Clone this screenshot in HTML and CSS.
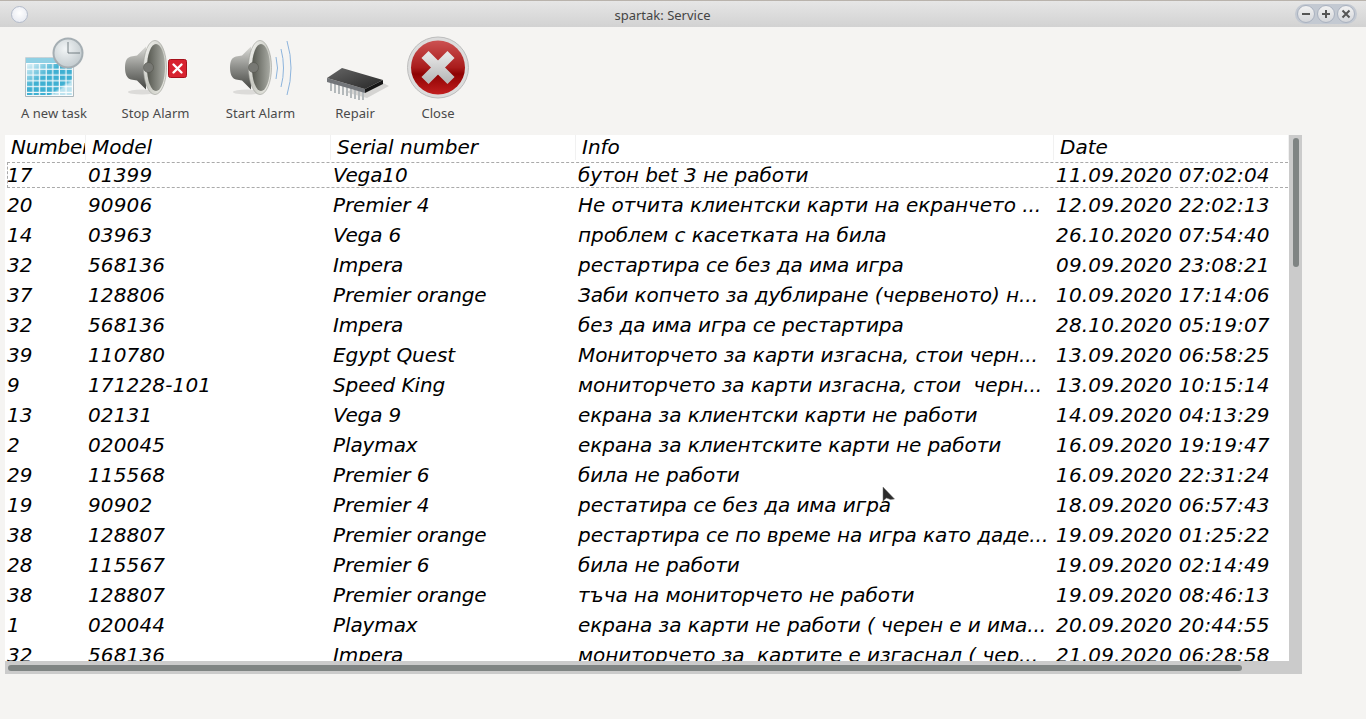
FILE: index.html
```html
<!DOCTYPE html>
<html lang="en">
<head>
  <meta charset="UTF-8" />
  <meta name="viewport" content="width=device-width, initial-scale=1.0"/>
  <title>spartak: Service</title>
  <link rel="stylesheet" href="styles.css">
</head>
<body>

  <header class="titlebar">
    <span class="menu-btn"></span>
    <span class="title">spartak: Service</span>
    <div class="win-btns">
      <span class="win-btn"><svg viewBox="0 0 12 12"><path d="M2 6h8"/></svg></span>
      <span class="win-btn"><svg viewBox="0 0 12 12"><path d="M2 6h8M6 2v8"/></svg></span>
      <span class="win-btn"><svg viewBox="0 0 12 12"><path d="M2.5 2.5l7 7M9.5 2.5l-7 7"/></svg></span>
    </div>
  </header>

  <nav class="toolbar">
    <div class="tool">
      <svg class="tool-icon" viewBox="19 36 70 64">
        <defs>
          <linearGradient id="calBody" x1="0" y1="0" x2="0" y2="1">
            <stop offset="0" stop-color="#c9d3d8"/>
            <stop offset="1" stop-color="#a9b6bc"/>
          </linearGradient>
          <linearGradient id="calFade" x1="0" y1="0" x2="1" y2="1">
            <stop offset="0" stop-color="#fff" stop-opacity=".9"/>
            <stop offset=".4" stop-color="#fff" stop-opacity="0"/>
            <stop offset=".72" stop-color="#fff" stop-opacity="0"/>
            <stop offset=".78" stop-color="#fff" stop-opacity=".65"/>
          </linearGradient>
          <pattern id="calCells" x="27" y="64" width="6.6" height="5.8" patternUnits="userSpaceOnUse">
            <rect width="5.4" height="4.6" fill="#3fb0d2"/>
          </pattern>
          <radialGradient id="clockFace" cx=".4" cy=".35" r=".8">
            <stop offset="0" stop-color="#f2f5f6"/>
            <stop offset="1" stop-color="#bcc5c9"/>
          </radialGradient>
          <linearGradient id="coneRim" x1="0" y1="0" x2="1" y2="1">
            <stop offset="0" stop-color="#fbfbf8"/>
            <stop offset=".5" stop-color="#c8c9c2"/>
            <stop offset="1" stop-color="#efefe9"/>
          </linearGradient>
          <linearGradient id="coneIn" x1="0" y1="0" x2="1" y2="0">
            <stop offset="0" stop-color="#55574f"/>
            <stop offset="1" stop-color="#a8aaa3"/>
          </linearGradient>
          <linearGradient id="magnet" x1="0" y1="0" x2="0" y2="1">
            <stop offset="0" stop-color="#dadad6"/>
            <stop offset=".5" stop-color="#8b8c88"/>
            <stop offset="1" stop-color="#444541"/>
          </linearGradient>
          <linearGradient id="redBall" x1="0" y1="0" x2="0" y2="1">
            <stop offset="0" stop-color="#cc5252"/>
            <stop offset=".5" stop-color="#a91c1c"/>
            <stop offset=".62" stop-color="#8e0202"/>
            <stop offset="1" stop-color="#c21f1f"/>
          </linearGradient>
          <linearGradient id="silver" x1="0" y1="0" x2="0" y2="1">
            <stop offset="0" stop-color="#e6e6e6"/>
            <stop offset="1" stop-color="#b9b9b9"/>
          </linearGradient>
          <linearGradient id="chipTop" x1="0" y1="0" x2="1" y2="1">
            <stop offset="0" stop-color="#666"/>
            <stop offset="1" stop-color="#272727"/>
          </linearGradient>
          <symbol id="speaker" viewBox="0 0 42 56" overflow="visible">
            <ellipse cx="17" cy="52" rx="14" ry="2.5" fill="#000" opacity=".1"/>
            <path d="M0 27.500c0-7 2-10 6-11l6-1 9-9v43l-9-9-6-1c-4-1-6-5-6-12z" fill="url(#magnet)"/>
            <ellipse cx="30" cy="27.5" rx="11.5" ry="27" fill="url(#coneRim)" stroke="#9b9c96" stroke-width=".6"/>
            <ellipse cx="31" cy="27.5" rx="9" ry="23.5" fill="url(#coneIn)"/>
            <circle cx="23.5" cy="27.5" r="5" fill="#777873" stroke="#55564f" stroke-width=".6"/>
          </symbol>
        </defs>
        <rect x="25" y="57" width="49" height="40" rx="1" fill="url(#calBody)"/>
        <rect x="26" y="58" width="47" height="5" fill="#8fd0e4"/>
        <rect x="26" y="63" width="47" height="33" fill="#f3f8fa"/>
        <rect x="27" y="64" width="45" height="31" fill="url(#calCells)"/>
        <rect x="26" y="63" width="47" height="33" fill="url(#calFade)"/>
        <circle cx="68" cy="53" r="15.5" fill="#a5aeb3"/>
        <circle cx="68" cy="53" r="13.5" fill="url(#clockFace)"/>
        <path d="M68 42v11h12" fill="none" stroke="#59646a" stroke-width=".8"/>
      </svg>
      <span class="tool-label">A new task</span>
    </div>

    <div class="tool">
      <svg class="tool-icon" viewBox="121 36 70 64">
        <use href="#speaker" x="125" y="40" width="42" height="56"/>
        <rect x="168.500" y="59.500" width="18" height="18" rx="2" fill="#d8222f" stroke="#a5111b"/>
        <path d="M173.500 64.500l8 8M181.500 64.500l-8 8" stroke="#fff" stroke-width="2.400" stroke-linecap="round"/>
      </svg>
      <span class="tool-label">Stop Alarm</span>
    </div>

    <div class="tool">
      <svg class="tool-icon" viewBox="226 36 70 64">
        <use href="#speaker" x="230" y="40" width="42" height="56"/>
        <g fill="none" stroke="#8db4dd" stroke-width="1">
          <path d="M276 57q3 11 0 22"/>
          <path d="M281 49q5 19 0 38"/>
          <path d="M287 41q8 27 0 54"/>
        </g>
      </svg>
      <span class="tool-label">Start Alarm</span>
    </div>

    <div class="tool">
      <svg class="tool-icon" viewBox="320 36 70 64">
        <path d="M345 92l22 6 22-12-10-5z" fill="#000" opacity=".13"/>
        <g stroke="#b4b9bb" stroke-width="2" fill="none">
          <path d="M331 82v9M335 84v9M339 85v9M343 86v9M347 87v9M351 88v10M355 89v10M359 90v10M363 91v10"/>
        </g>
        <path d="M327 78l38 11v4l-38-11z" fill="#73767a"/>
        <path d="M365 89l18-9v4l-18 9z" fill="#161616"/>
        <path d="M327 78l15-10 41 12-18 9z" fill="url(#chipTop)"/>
      </svg>
      <span class="tool-label">Repair</span>
    </div>

    <div class="tool">
      <svg class="tool-icon" viewBox="403 36 70 64">
        <circle cx="438" cy="67.500" r="30.500" fill="#dcdcdc" stroke="#bdbdbd"/>
        <circle cx="438" cy="67.500" r="27" fill="url(#redBall)"/>
        <path d="M425 54.500l26 26M451 54.500l-26 26" stroke="url(#silver)" stroke-width="10"/>
      </svg>
      <span class="tool-label">Close</span>
    </div>
  </nav>

  <section class="panel">
    <div class="list">
      <div class="row head">
        <div>Number</div><div>Model</div><div>Serial number</div><div>Info</div><div>Date</div>
      </div>
      <div class="row focused">
        <div>17</div><div>01399</div><div>Vega10</div><div>бутон bet 3 не работи</div><div>11.09.2020 07:02:04</div>
      </div>
      <div class="row">
        <div>20</div><div>90906</div><div>Premier 4</div><div>Не отчита клиентски карти на екранчето ...</div><div>12.09.2020 22:02:13</div>
      </div>
      <div class="row">
        <div>14</div><div>03963</div><div>Vega 6</div><div>проблем с касетката на била</div><div>26.10.2020 07:54:40</div>
      </div>
      <div class="row">
        <div>32</div><div>568136</div><div>Impera</div><div>рестартира се без да има игра</div><div>09.09.2020 23:08:21</div>
      </div>
      <div class="row">
        <div>37</div><div>128806</div><div>Premier orange</div><div>Заби копчето за дублиране (червеното) н...</div><div>10.09.2020 17:14:06</div>
      </div>
      <div class="row">
        <div>32</div><div>568136</div><div>Impera</div><div>без да има игра се рестартира</div><div>28.10.2020 05:19:07</div>
      </div>
      <div class="row">
        <div>39</div><div>110780</div><div>Egypt Quest</div><div>Мониторчето за карти изгасна, стои черн...</div><div>13.09.2020 06:58:25</div>
      </div>
      <div class="row">
        <div>9</div><div>171228-101</div><div>Speed King</div><div>мониторчето за карти изгасна, стои &nbsp;черн...</div><div>13.09.2020 10:15:14</div>
      </div>
      <div class="row">
        <div>13</div><div>02131</div><div>Vega 9</div><div>екрана за клиентски карти не работи</div><div>14.09.2020 04:13:29</div>
      </div>
      <div class="row">
        <div>2</div><div>020045</div><div>Playmax</div><div>екрана за клиентските карти не работи</div><div>16.09.2020 19:19:47</div>
      </div>
      <div class="row">
        <div>29</div><div>115568</div><div>Premier 6</div><div>била не работи</div><div>16.09.2020 22:31:24</div>
      </div>
      <div class="row">
        <div>19</div><div>90902</div><div>Premier 4</div><div>рестатира се без да има игра</div><div>18.09.2020 06:57:43</div>
      </div>
      <div class="row">
        <div>38</div><div>128807</div><div>Premier orange</div><div>рестартира се по време на игра като даде...</div><div>19.09.2020 01:25:22</div>
      </div>
      <div class="row">
        <div>28</div><div>115567</div><div>Premier 6</div><div>била не работи</div><div>19.09.2020 02:14:49</div>
      </div>
      <div class="row">
        <div>38</div><div>128807</div><div>Premier orange</div><div>тъча на мониторчето не работи</div><div>19.09.2020 08:46:13</div>
      </div>
      <div class="row">
        <div>1</div><div>020044</div><div>Playmax</div><div>екрана за карти не работи ( черен е и има...</div><div>20.09.2020 20:44:55</div>
      </div>
      <div class="row">
        <div>32</div><div>568136</div><div>Impera</div><div>мониторчето за &nbsp;картите е изгаснал ( чер...</div><div>21.09.2020 06:28:58</div>
      </div>
    </div>
    <div class="vscroll"><div class="vthumb"></div></div>
    <div class="hscroll"><div class="hthumb"></div></div>
  </section>

  <svg class="cursor" viewBox="0 0 14 18">
    <path d="M1 1v14l3.500-3 4 1.500 4-.500z" fill="#2b2b2b" stroke="#777" stroke-width=".5"/>
  </svg>

</body>
</html>
```

FILE: styles.css
```css
html, body {
  margin: 0;
  height: 719px;
  overflow: hidden;
}

body {
  background: #f5f4f2;
  font-family: "Noto Sans", sans-serif;
  position: relative;
}

.titlebar {
  height: 26px;
  border-top: 1px solid #b9b3ac;
  background: linear-gradient(#e6e6e6, #d2d2d2);
  display: flex;
  align-items: center;
  justify-content: space-between;
  padding: 0 9px 0 11px;
}

.menu-btn {
  width: 15px;
  height: 15px;
  border-radius: 50%;
  border: 1px solid #b4bccb;
  background: radial-gradient(circle at 50% 40%, #fff, #e2e5ee);
}

.title {
  font-size: 13px;
  color: #444;
  margin-left: 2px;
  padding-top: 2px;
}

.win-btns {
  display: flex;
  gap: 2px;
  padding: 1px 2px;
  border-radius: 10px;
  background: #c3c9d2;
}

.win-btn {
  width: 16px;
  height: 16px;
  border-radius: 50%;
  border: 1px solid #aab2c0;
  background: linear-gradient(#f2f2f2, #d4d6da);
  display: flex;
  align-items: center;
  justify-content: center;
}

.win-btn svg {
  width: 12px;
  height: 12px;
  fill: none;
  stroke: #555;
  stroke-width: 2;
}

.toolbar {
  height: 99px;
  padding: 9px 0 0 5px;
  display: grid;
  grid-template-columns: 98px 105px 105px 84px 82px;
}

.tool {
  display: flex;
  flex-direction: column;
  align-items: center;
}

.tool-icon {
  width: 70px;
  height: 64px;
  flex: none;
}

.tool-label {
  font-size: 13px;
  line-height: 18px;
  margin-top: 4px;
  color: #4a4a4a;
  letter-spacing: .05px;
  white-space: nowrap;
}

.panel {
  margin-left: 5px;
  width: 1297px;
  height: 539px;
  display: grid;
  grid-template-columns: 1284px 13px;
  grid-template-rows: 526px 13px;
  background: #cbcbcb;
}

.list {
  background: #fff;
  overflow: hidden;
  font-family: "DejaVu Sans", sans-serif;
  font-style: italic;
  font-size: 20px;
  color: #000;
}

.row {
  display: grid;
  grid-template-columns: 81px 245px 245px 478px 1fr;
  height: 30px;
  line-height: 30px;
  white-space: nowrap;
}

.row > div {
  padding-left: 2px;
  overflow: hidden;
}

/* per column spacing, the app's text is hinted a bit wider or narrower */
.row > div:nth-child(2) {
  letter-spacing: .15px;
}

.row > div:nth-child(3) {
  letter-spacing: -.1px;
}

.row > div:nth-child(4) {
  letter-spacing: -.06px;
}

.row > div:nth-child(5) {
  letter-spacing: .16px;
}

.row.head > div {
  padding-left: 6px;
  letter-spacing: 0;
  border-right: 1px solid #f1f1f1;
  box-sizing: border-box;
}

.row.head > div:first-child {
  letter-spacing: -.2px;
}

.head {
  height: 25px;
  line-height: 24px;
}

.focused {
  width: 1300px;
  outline: 1px dashed #aaa;
  outline-offset: -3px;
}

.vscroll {
  padding: 3px 4px;
}

.vthumb {
  width: 6px;
  height: 129px;
  border-radius: 3px;
  background: #7f8483;
}

.hscroll {
  grid-column: 1 / 3;
  padding: 4px 3px;
}

.hthumb {
  width: 1234px;
  height: 6px;
  border-radius: 3px;
  background: #7f8483;
}

.cursor {
  position: absolute;
  left: 882px;
  top: 486px;
  width: 14px;
  height: 18px;
}
```
